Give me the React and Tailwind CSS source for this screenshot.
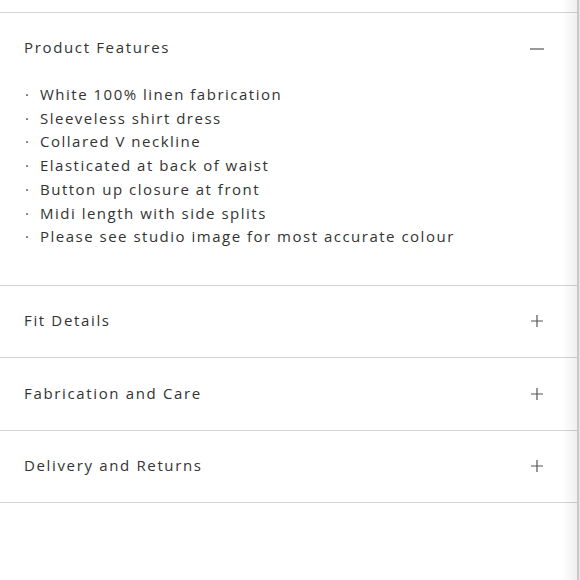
import React, { useState } from 'react';

const features = [
  'White 100% linen fabrication',
  'Sleeveless shirt dress',
  'Collared V neckline',
  'Elasticated at back of waist',
  'Button up closure at front',
  'Midi length with side splits',
  'Please see studio image for most accurate colour',
];

const sections = [
  { title: 'Fit Details', h: 'h-[71px]' },
  { title: 'Fabrication and Care', h: 'h-[72px]' },
  { title: 'Delivery and Returns', h: 'h-[71px]' },
];

const Plus = () => (
  <svg width="12" height="12" viewBox="0 0 12 12" className="text-[#555]">
    <path d="M6 0v12M0 6h12" stroke="currentColor" strokeWidth="1.2" />
  </svg>
);

const Minus = () => (
  <svg width="14" height="12" viewBox="0 0 14 12" className="text-[#555]">
    <path d="M0 6h14" stroke="currentColor" strokeWidth="1.2" />
  </svg>
);

const App = () => {
  const [open, setOpen] = useState('Product Features');

  return (
    <div className="relative w-[580px] h-[580px] bg-white overflow-hidden text-[#333] font-['Open_Sans',sans-serif]">
      <div className="pt-[12px] pr-[3px]">
        {/* Product Features */}
        <div className="border-t border-[#d4d4d4]">
          <button
            onClick={() => setOpen(open === 'Product Features' ? null : 'Product Features')}
            className="w-full h-[71px] flex items-center justify-between pl-6 pr-[33px] text-[15px] tracking-[0.11em]"
          >
            <span className="-mt-[2px]">Product Features</span>
            {open === 'Product Features' ? <Minus /> : <Plus />}
          </button>
          {open === 'Product Features' && (
            <ul className="pl-6 pb-[36px] -mt-px text-[15px] tracking-[0.1em] leading-[23.7px]">
              {features.map((f) => (
                <li key={f} className="flex">
                  <span className="w-4 shrink-0 pl-[1px] text-[#555]">·</span>
                  <span>{f}</span>
                </li>
              ))}
            </ul>
          )}
        </div>

        {sections.map((s) => (
          <div key={s.title} className="border-t border-[#d4d4d4]">
            <button
              onClick={() => setOpen(open === s.title ? null : s.title)}
              className={`w-full ${s.h} flex items-center justify-between pl-6 pr-[34px] text-[15px] tracking-[0.11em]`}
            >
              <span className="-mt-[2px]">{s.title}</span>
              {open === s.title ? <Minus /> : <Plus />}
            </button>
          </div>
        ))}
        <div className="border-t border-[#d4d4d4]" />
      </div>

      {/* right edge shade */}
      <div className="absolute top-0 right-0 h-full w-[18px] flex pointer-events-none">
        <div className="flex-1 bg-gradient-to-r from-transparent to-[#00000010]" />
        <div className="w-[2px] bg-[#c8c8c8]" />
        <div className="w-px bg-[#e8e8e8]" />
      </div>
    </div>
  );
};

export default App;
